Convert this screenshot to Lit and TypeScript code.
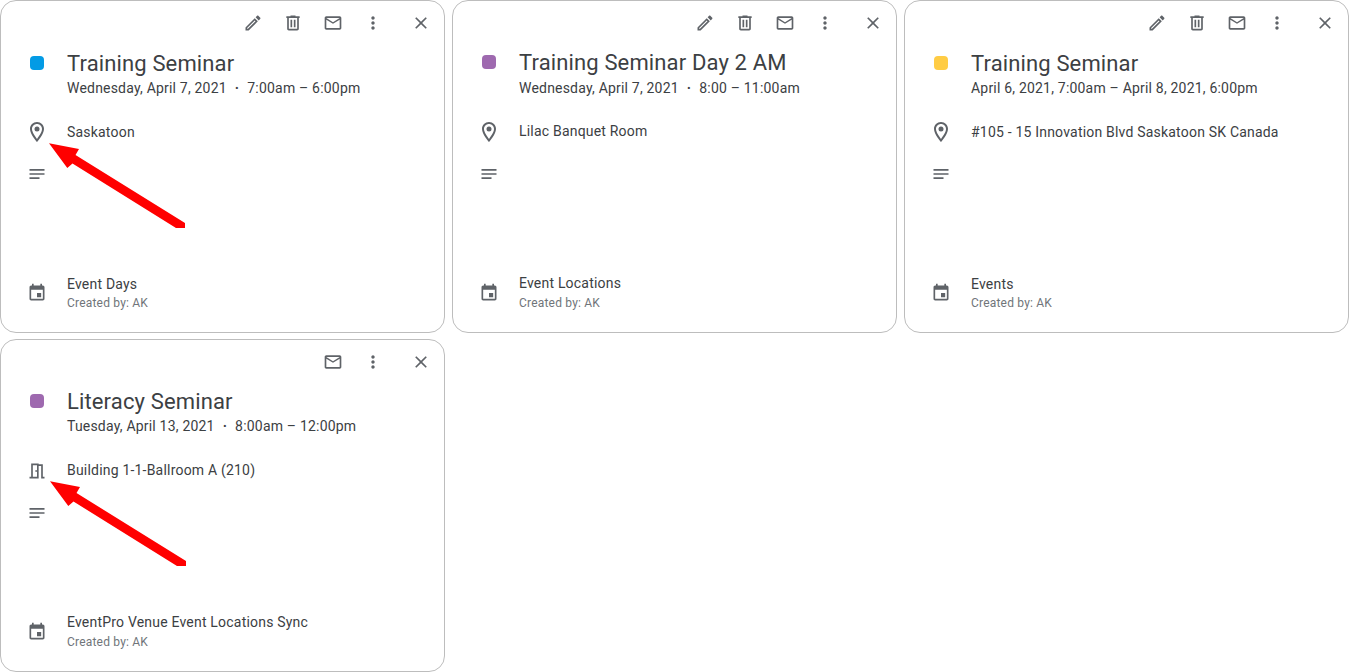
import { LitElement, html, css, svg } from "lit";
import { customElement } from "lit/decorators.js";

const P = {
  edit: svg`<path d="M14.06 9.02l.92.92L5.92 19H5v-.92l9.06-9.06M17.66 3c-.25 0-.51.1-.7.29l-1.83 1.83 3.75 3.75 1.83-1.83c.39-.39.39-1.02 0-1.41l-2.34-2.34c-.2-.2-.45-.29-.71-.29zm-3.6 3.19L3 17.25V21h3.75L17.81 9.94l-3.75-3.75z"/>`,
  del: svg`<path d="M15 4V3H9v1H4v2h1v13c0 1.1.9 2 2 2h10c1.1 0 2-.9 2-2V6h1V4h-5zm2 15H7V6h10v13zM9 8h2v9H9zm4 0h2v9h-2z"/>`,
  mail: svg`<path d="M20 4H4c-1.1 0-1.99.9-1.99 2L2 18c0 1.1.9 2 2 2h16c1.1 0 2-.9 2-2V6c0-1.1-.9-2-2-2zm0 14H4V8l8 5 8-5v10zm-8-7L4 6h16l-8 5z"/>`,
  more: svg`<path d="M12 8c1.1 0 2-.9 2-2s-.9-2-2-2-2 .9-2 2 .9 2 2 2zm0 2c-1.1 0-2 .9-2 2s.9 2 2 2 2-.9 2-2-.9-2-2-2zm0 6c-1.1 0-2 .9-2 2s.9 2 2 2 2-.9 2-2-.9-2-2-2z"/>`,
  close: svg`<path d="M19 6.41L17.59 5 12 10.59 6.41 5 5 6.41 10.59 12 5 17.59 6.41 19 12 13.41 17.59 19 19 17.59 13.41 12z"/>`,
  place: svg`<path d="M12 2C8.13 2 5 5.13 5 9c0 5.25 7 13 7 13s7-7.75 7-13c0-3.87-3.13-7-7-7zM7 9c0-2.76 2.24-5 5-5s5 2.24 5 5c0 2.88-2.88 7.19-5 9.88C9.92 16.21 7 11.85 7 9z"/><circle cx="12" cy="9" r="2.5"/>`,
  notes: svg`<path d="M3 18h12v-2H3v2zM3 6v2h18V6H3zm0 7h18v-2H3v2z"/>`,
  event: svg`<path d="M17 12h-5v5h5v-5zM16 1v2H8V1H6v2H5c-1.11 0-1.99.9-1.99 2L3 19c0 1.1.89 2 2 2h14c1.1 0 2-.9 2-2V5c0-1.1-.9-2-2-2h-1V1h-2zm3 18H5V8h14v11z"/>`,
  room: svg`<path fill-rule="evenodd" d="M14 6v15H3v-2h2V3h9v1h5v15h2v2h-4V6h-3zM12 5H7v14h5V5zM10 11v2h2v-2h-2z"/>`,
};

const icon = (p: unknown, cls = "s20") =>
  html`<svg class="icon ${cls}" viewBox="0 0 24 24" aria-hidden="true">${p}</svg>`;

interface Ev {
  color: string; title: string; date: string; time: string; place: string;
  placeIcon: unknown; placeCls: string; cal: string; full: boolean; arrow: string; cls: string;
}

const EVENTS: Ev[] = [
  { color: "#039be5", title: "Training Seminar", date: "Wednesday, April 7, 2021", time: "7:00am – 6:00pm", place: "Saskatoon", placeIcon: P.place, placeCls: "s24", cal: "Event Days", full: true, arrow: "a1", cls: "" },
  { color: "#9e69af", title: "Training Seminar Day 2 AM", date: "Wednesday, April 7, 2021", time: "8:00 – 11:00am", place: "Lilac Banquet Room", placeIcon: P.place, placeCls: "s24", cal: "Event Locations", full: true, arrow: "", cls: "up" },
  { color: "#ffcc44", title: "Training Seminar", date: "April 6, 2021, 7:00am – April 8, 2021, 6:00pm", time: "", place: "#105 - 15 Innovation Blvd Saskatoon SK Canada", placeIcon: P.place, placeCls: "s24", cal: "Events", full: true, arrow: "", cls: "" },
  { color: "#9e69af", title: "Literacy Seminar", date: "Tuesday, April 13, 2021", time: "8:00am – 12:00pm", place: "Building 1-1-Ballroom A (210)", placeIcon: P.room, placeCls: "s20", cal: "EventPro Venue Event Locations Sync", full: false, arrow: "a2", cls: "up up-date" },
];

@customElement("app-root")
export class AppRoot extends LitElement {
  static styles = css`
    :host { display: block; width: 1349px; height: 672px; background: #fff; overflow: hidden;
      font-family: Roboto, "Liberation Sans", sans-serif; color: #3c4043; }
    .grid { display: grid; grid-template-columns: repeat(3, 445px); grid-auto-rows: 333px; column-gap: 7px; row-gap: 6px; }
    .card { position: relative; box-sizing: border-box; border: 1px solid #bdbdbd; border-radius: 16px; background: #fff;
      display: flex; flex-direction: column; }
    .icon { display: block; fill: #5f6368; flex: none; }
    .s20 { width: 20px; height: 20px; }
    .s24 { width: 24px; height: 24px; }
    .tools { display: flex; justify-content: flex-end; align-items: center; height: 24px; margin-top: 10px; padding-right: 3px; flex: none; }
    .tool { width: 40px; display: flex; justify-content: center; }
    .tool.x { margin-left: 8px; }
    .body { display: grid; grid-template-columns: 24px 1fr; column-gap: 18px; padding-left: 24px; flex: 1; min-height: 0;
      grid-template-rows: 76px 41px 44px 1fr auto; }
    .sw { width: 14px; height: 14px; border-radius: 4px; justify-self: center; margin-top: 21px; }
    .up .sw { margin-top: 20px; }
    .title { font-size: 22px; line-height: 28px; margin-top: 15px; white-space: nowrap; letter-spacing: .14px; }
    .up .title { margin-top: 14px; margin-bottom: 1px; }
    .up-date .title { margin-bottom: 0; }
    .date { font-size: 14px; line-height: 20px; letter-spacing: .2px; white-space: pre; }
    .dot { margin: 0 8px; font-weight: 700; }
    .hd { display: flex; flex-direction: column; }
    .row-text { font-size: 14px; line-height: 20px; letter-spacing: .2px; align-self: center; white-space: nowrap; }
    .up .row-text { margin-top: -2px; }
    .ic { align-self: center; display: flex; justify-content: center; }
    .foot { grid-column: 1 / 3; grid-row: 5; display: grid; grid-template-columns: 24px 1fr; column-gap: 18px; padding-bottom: 21px; align-items: center; justify-items: start; }
    .foot > svg { justify-self: center; }
    .lines { display: flex; flex-direction: column; }
    .c { font-size: 14px; line-height: 20px; letter-spacing: .2px; white-space: nowrap; }
    .up .c { margin-top: -1px; margin-bottom: 1px; }
    .b { font-size: 12px; line-height: 16px; color: #70757a; letter-spacing: .2px; margin-top: 1px; }
    .arrow { position: absolute; left: 47px; top: 141px; pointer-events: none; }
    .a2 { left: 48px; top: 140px; }
  `;

  private card(e: Ev) {
    return html`<div class="card ${e.cls}">
      <div class="tools">
        ${e.full ? html`<div class="tool">${icon(P.edit)}</div><div class="tool">${icon(P.del)}</div>` : ""}
        <div class="tool">${icon(P.mail)}</div>
        <div class="tool">${icon(P.more)}</div>
        <div class="tool x">${icon(P.close)}</div>
      </div>
      <div class="body">
        <div class="sw" style="background:${e.color}"></div>
        <div class="hd">
          <div class="title">${e.title}</div>
          <div class="date">${e.date}${e.time ? html`<span class="dot">·</span>${e.time}` : ""}</div>
        </div>
        <div class="ic">${icon(e.placeIcon, e.placeCls)}</div>
        <div class="row-text">${e.place}</div>
        <div class="ic">${icon(P.notes)}</div>
        <div></div>
        <div class="foot">
          ${icon(P.event)}
          <div class="lines"><div class="c">${e.cal}</div><div class="b">Created by: AK</div></div>
        </div>
      </div>
      ${e.arrow ? html`<svg class="arrow ${e.arrow === "a2" ? "a2" : ""}" width="140" height="90" viewBox="0 0 140 90" aria-hidden="true">
        <polygon fill="#ff0000" points="1,1.3 31,7 27.5,13 137,81 137,86 128,86 24.5,21.5 19.3,26"/></svg>` : ""}
    </div>`;
  }

  render() {
    return html`<div class="grid">${EVENTS.map((e) => this.card(e))}</div>`;
  }
}
